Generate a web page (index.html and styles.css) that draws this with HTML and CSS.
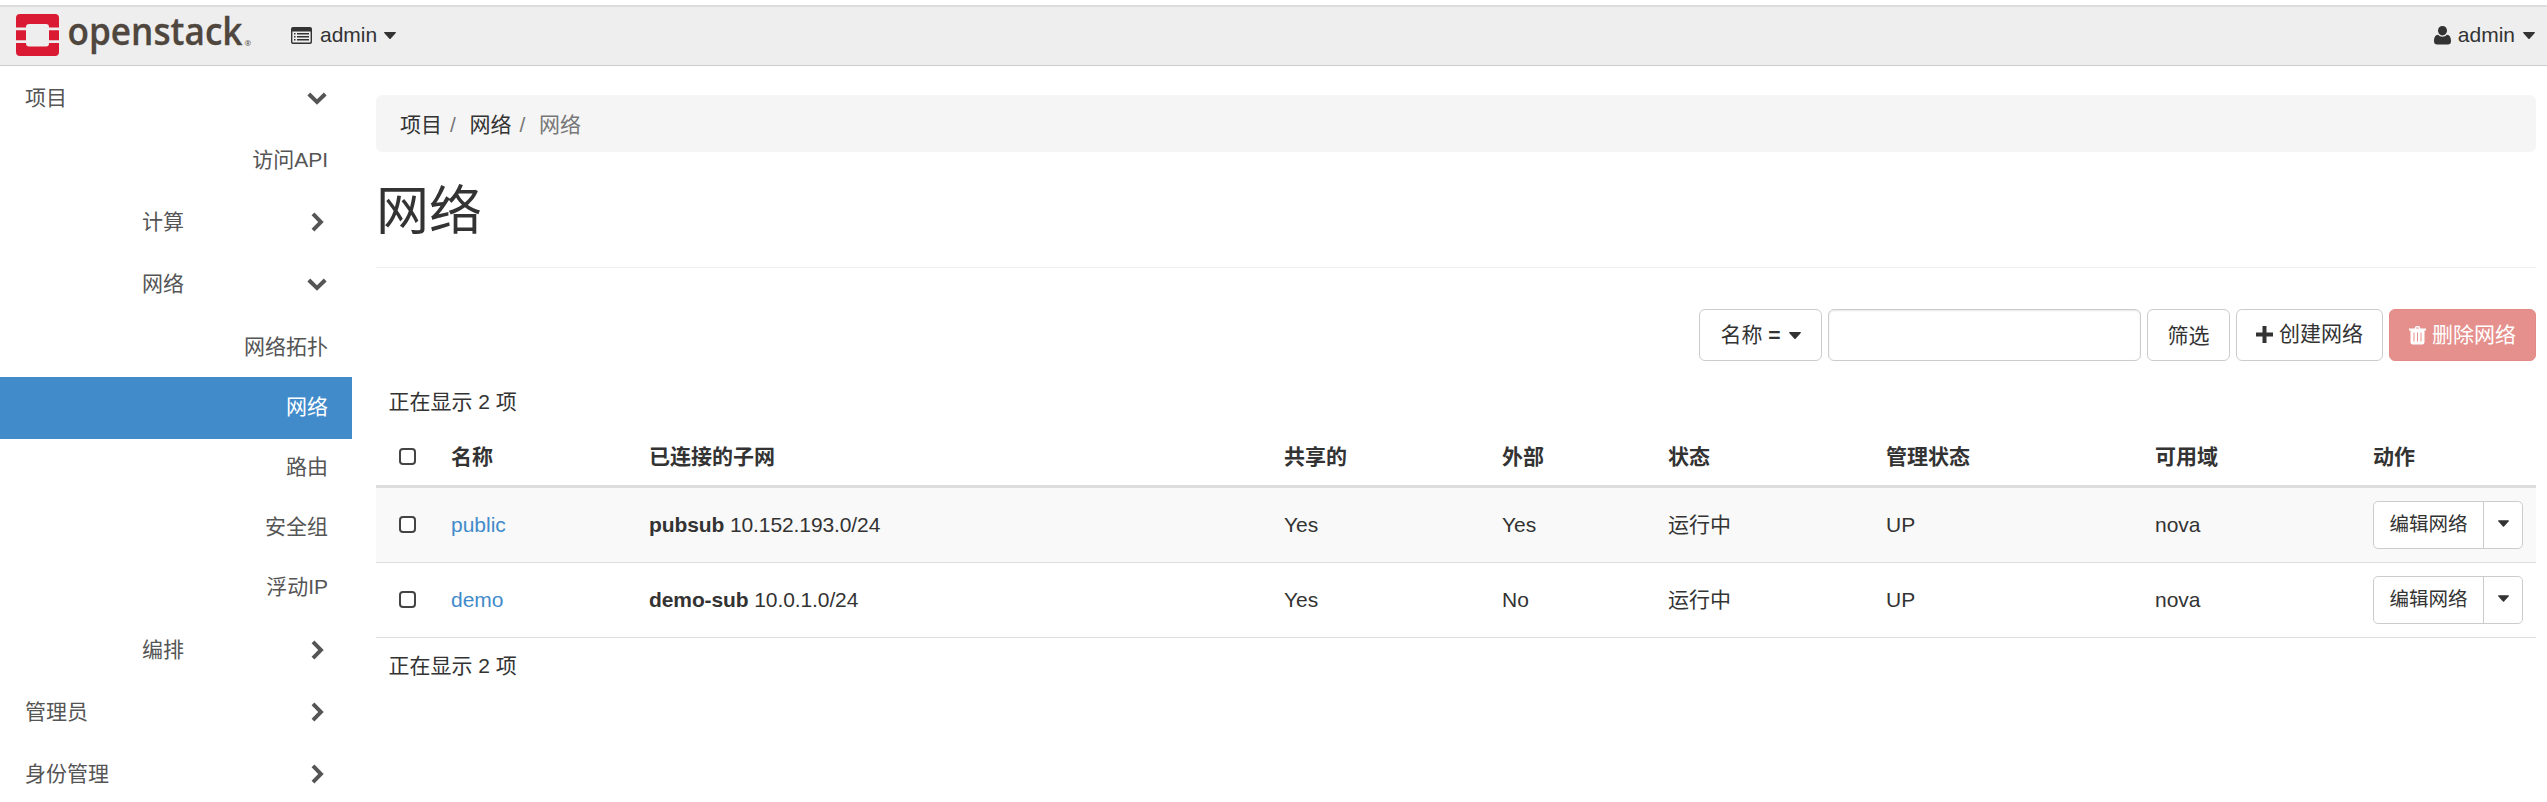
FILE: index.html
```html
<!DOCTYPE html>
<html lang="zh-CN">
<head>
<meta charset="utf-8">
<title>网络 - OpenStack Dashboard</title>
<link rel="stylesheet" href="styles.css">
</head>
<body>
<svg class="defs" width="0" height="0" aria-hidden="true">
  <symbol id="down" viewBox="0 0 20 13"><path d="M3.2 .6 10 7.2 16.800 .6 19.600 3.400 10 12.700 .4 3.400z"/></symbol>
  <symbol id="right" viewBox="0 0 13 20"><path d="M.6 3.200 7.200 10 .6 16.800 3.400 19.600 12.700 10 3.400 .4z"/></symbol>
  <symbol id="caret" viewBox="0 0 12 7"><path d="M0 .8Q0 0 .8 0H11.200Q12 0 12 .8L6.600 6.700Q6 7.200 5.400 6.700z"/></symbol>
</svg>
<header class="navbar">
  <svg class="logo" width="240" height="50" viewBox="0 0 240 50">
    <path fill="#da1a32" d="M4 0H39Q43 0 43 4V13.500H33V13Q33 10 30 10H13Q10 10 10 13V13.500H0V4Q0 0 4 0zM0 16.300H10V26.200H0zM33 16.300H43V26.200H33zM0 29H10V29.500Q10 32.500 13 32.500H30Q33 32.500 33 29.500V29H43V38Q43 42 39 42H4Q0 42 0 38z"/>
    <text class="wordmark" x="51.500" y="31.200" textLength="175" lengthAdjust="spacingAndGlyphs">openstack</text>
    <text class="reg" x="228.500" y="32">®</text>
  </svg>
  <a class="menu project">
    <svg width="21" height="17" viewBox="0 0 21 17"><path fill="#333" fill-rule="evenodd" d="M2 0H19Q21 0 21 2V15Q21 17 19 17H2Q0 17 0 15V2Q0 0 2 0zM1.400 4.500V14.800Q1.400 15.600 2.200 15.600H18.800Q19.600 15.600 19.600 14.800V4.500zM3 6H4.500V7.500H3zM6 6H18V7.500H6zM3 9H4.500V10.500H3zM6 9H18V10.500H6zM3 12H4.500V13.500H3zM6 12H18V13.500H6z"/></svg>
    <span>admin</span><svg class="caret"><use href="#caret"/></svg>
  </a>
  <a class="menu user">
    <svg width="17" height="19" viewBox="0 0 17 19"><path fill="#333" d="M8.500 0C11.100 0 13 2 13 4.600S11.100 9.400 8.500 9.400 4 7.200 4 4.600 5.900 0 8.500 0zM4 8.800C5.200 10 6.700 10.700 8.500 10.700S11.800 10 13 8.800C15.800 9 17 11.800 17 15.200 17 17.400 15.700 18.500 13.800 18.500H3.200C1.300 18.500 0 17.400 0 15.200 0 11.800 1.200 9 4 8.800z"/></svg>
    <span>admin</span><svg class="caret"><use href="#caret"/></svg>
  </a>
</header>
<div class="page">
  <nav class="sidebar">
    <a class="group">项目<svg class="down"><use href="#down"/></svg></a>
    <a class="group leafy">访问API</a>
    <a class="group sub">计算<svg class="right"><use href="#right"/></svg></a>
    <a class="group sub">网络<svg class="down"><use href="#down"/></svg></a>
    <div class="leaves">
      <a class="leaf">网络拓扑</a>
      <a class="leaf active">网络</a>
      <a class="leaf">路由</a>
      <a class="leaf">安全组</a>
      <a class="leaf">浮动IP</a>
    </div>
    <a class="group sub">编排<svg class="right"><use href="#right"/></svg></a>
    <a class="group">管理员<svg class="right"><use href="#right"/></svg></a>
    <a class="group">身份管理<svg class="right"><use href="#right"/></svg></a>
  </nav>
  <main class="content">
    <div class="breadcrumb"><a>项目</a><i>/</i><a>网络</a><i>/</i><span>网络</span></div>
    <h1>网络</h1>
    <div class="toolbar">
      <button class="btn filter-by"><span>名称 <b>=</b></span><svg class="caret"><use href="#caret"/></svg></button>
      <input class="search" type="text" aria-label="筛选">
      <button class="btn filter">筛选</button>
      <button class="btn create"><svg width="17" height="17" viewBox="0 0 17 17"><path d="M6.500 0H10.500V6.500H17V10.500H10.500V17H6.500V10.500H0V6.500H6.500z"/></svg>创建网络</button>
      <button class="btn delete"><svg width="17" height="19" viewBox="0 0 17 19"><path fill-rule="evenodd" d="M5.500 2.500 6.300 .7Q6.600 0 7.400 0H9.600Q10.400 0 10.700 .7L11.500 2.500H17V4.500H15.500V16Q15.500 18.500 13.300 18.500H3.700Q1.500 18.500 1.500 16V4.500H0V2.500zM7 2.500H10L9.600 1.400H7.400zM4.500 6.500V15.500H5.500V6.500zM8 6.500V15.500H9V6.500zM11.500 6.500V15.500H12.500V6.500z"/></svg>删除网络</button>
    </div>
    <div class="count">正在显示 2 项</div>
    <table>
      <colgroup><col class="c1"><col class="c2"><col class="c3"><col class="c4"><col class="c5"><col class="c6"><col class="c7"><col class="c8"><col class="c9"></colgroup>
      <thead><tr><th><span class="check"></span></th><th>名称</th><th>已连接的子网</th><th>共享的</th><th>外部</th><th>状态</th><th>管理状态</th><th>可用域</th><th>动作</th></tr></thead>
      <tbody>
        <tr><td><span class="check"></span></td><td><a class="link">public</a></td><td class="subnet"><b>pubsub</b> 10.152.193.0/24</td><td>Yes</td><td>Yes</td><td>运行中</td><td>UP</td><td>nova</td><td><div class="split"><button>编辑网络</button><button class="toggle" aria-label="更多"><svg class="caret"><use href="#caret"/></svg></button></div></td></tr>
        <tr><td><span class="check"></span></td><td><a class="link">demo</a></td><td class="subnet"><b>demo-sub</b> 10.0.1.0/24</td><td>Yes</td><td>No</td><td>运行中</td><td>UP</td><td>nova</td><td><div class="split"><button>编辑网络</button><button class="toggle" aria-label="更多"><svg class="caret"><use href="#caret"/></svg></button></div></td></tr>
      </tbody>
    </table>
    <div class="count foot">正在显示 2 项</div>
  </main>
</div>
</body>
</html>
```
FILE: styles.css
```css
* { box-sizing: border-box; }
html { overflow: hidden; }
body {
  margin: 0;
  padding-top: 5px;
  height: 802px;
  overflow: hidden;
  background: #fff;
  color: #333;
  font: 21px/30px "Liberation Sans", "Noto Sans CJK SC", sans-serif;
}
svg { display: block; flex: none; fill: currentColor; }
.defs { position: absolute; }
.caret { width: 12px; height: 7px; }

.navbar {
  display: flex;
  height: 61px;
  padding: 0 12px 0 16px;
  background: #eee;
  border-top: 2px solid #ddd;
  border-bottom: 1px solid #ccc;
}
.logo { margin-top: 7px; overflow: visible; }
.wordmark {
  font: 600 38.500px "Open Sans", sans-serif;
  fill: #4f463e;
  stroke: #4f463e;
  stroke-width: .3px;
}
.reg { font: 8px "Open Sans", sans-serif; fill: #4f463e; }
.menu { display: flex; align-items: center; height: 56px; }
.menu span { margin: 0 8px; }
.project { margin-left: 35px; }
.project span { margin-right: 7px; }
.user { margin-left: auto; }
.user span { margin-left: 7px; }

.page { display: flex; }
.sidebar { width: 352px; flex: none; padding-top: 1px; color: #555; }
.group {
  display: flex;
  align-items: center;
  justify-content: space-between;
  height: 62px;
  padding: 0 24px 0 25px;
}
.sub { padding-left: 142px; }
.leafy { justify-content: flex-end; }
.down { width: 20px; height: 13px; margin-right: 1px; }
.right { width: 13px; height: 20px; margin-right: 4px; }
.leaves { padding: 2px 0; }
.leaf { display: block; height: 60px; padding: 15px 24px; text-align: right; }
.active { height: 62px; margin-bottom: -2px; background: #428bca; color: #fff; }

.content { width: 2160px; margin-left: 24px; padding-top: 29px; }
.breadcrumb {
  display: flex;
  align-items: center;
  height: 57px;
  padding: 2px 24px 0;
  border-radius: 6px;
  background: #f5f5f5;
}
.breadcrumb i { width: 27.500px; padding-left: 8px; font-style: normal; color: #777; }
.breadcrumb span { color: #777; }
h1 {
  height: 116px;
  margin: 0;
  padding-top: 30px;
  border-bottom: 1px solid #eee;
  font-size: 53px;
  font-weight: 400;
  line-height: 60px;
}
.toolbar { display: flex; justify-content: flex-end; gap: 6px; height: 52px; margin-top: 41px; }
.btn {
  display: flex;
  align-items: center;
  justify-content: center;
  gap: 6px;
  height: 52px;
  padding: 0;
  border: 1px solid #ccc;
  border-radius: 6px;
  background: #fff;
  color: #333;
  font: inherit;
}
.filter-by { width: 123px; gap: 8px; }
.search {
  width: 313px;
  border: 1px solid #ccc;
  border-radius: 6px;
  box-shadow: inset 0 1px 2px rgba(0, 0, 0, .1);
}
.filter { width: 83px; padding-top: 1px; }
.create, .delete { width: 147px; }
.create { padding-bottom: 2px; }
.delete { background: #e6908d; border-color: #e38a87; color: #fff; }

.count { height: 67px; padding: 26px 12.500px 0; }
.foot { padding-top: 13px; }
table { width: 2160px; table-layout: fixed; border-collapse: separate; border-spacing: 0; }
.c1 { width: 63px; }
.c2 { width: 198px; }
.c3 { width: 635px; }
.c4 { width: 218px; }
.c5 { width: 166px; }
.c6 { width: 218px; }
.c7 { width: 269px; }
.c8 { width: 218px; }
.c9 { width: 175px; }
th, td { padding: 0 12px; text-align: left; vertical-align: middle; }
th { height: 60px; border-bottom: 3px solid #ddd; }
td { height: 75px; border-bottom: 1px solid #ddd; }
tbody tr:first-child { background: #f9f9f9; }
.subnet { letter-spacing: -.1px; }
.check {
  display: block;
  width: 17px;
  height: 17px;
  margin-left: 11px;
  border: 2px solid #444;
  border-radius: 4px;
  background: #fff;
}
td .check { margin-top: -1px; }
.link { color: #428bca; }
.split { display: flex; height: 48px; width: 150px; border: 1px solid #ccc; border-radius: 5px; background: #fff; }
.split button {
  display: flex;
  align-items: center;
  justify-content: center;
  width: 109px;
  padding: 0 0 3px;
  border: 0;
  background: none;
  color: #333;
  font: inherit;
  font-size: 19.500px;
}
.split .toggle { width: 39px; border-left: 1px solid #ccc; }
.toggle .caret { width: 11px; height: 7px; }
```
